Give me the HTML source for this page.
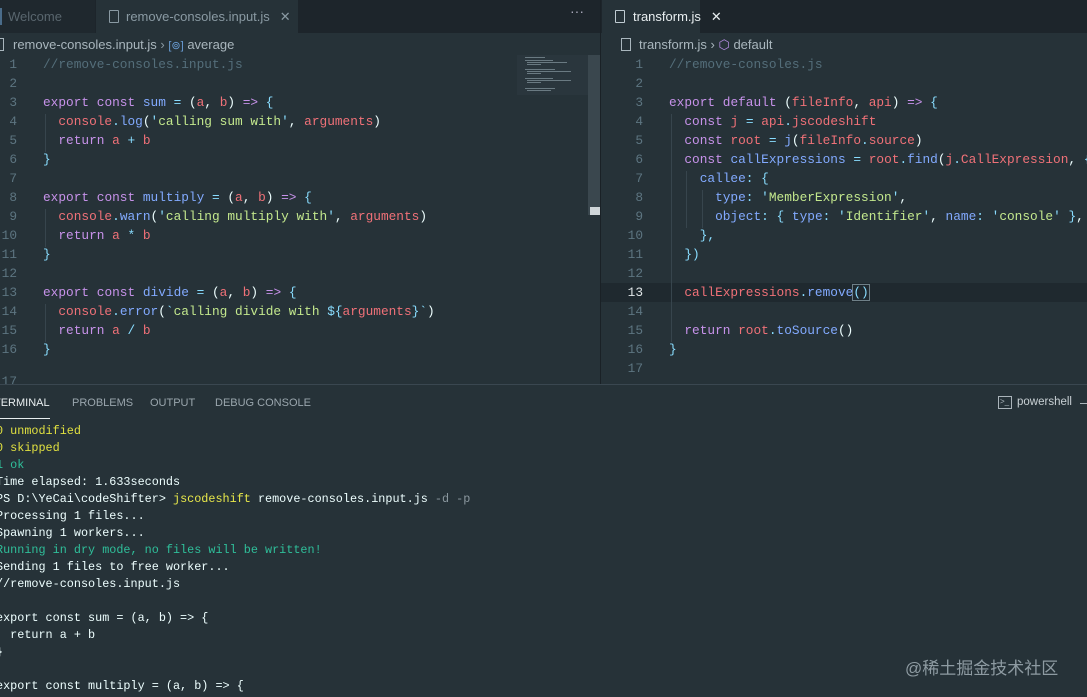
<!DOCTYPE html>
<html><head><meta charset="utf-8"><style>
*{margin:0;padding:0;box-sizing:border-box}
body{width:1087px;height:697px;overflow:hidden;background:#263238;font-family:"Liberation Sans",sans-serif;position:relative;color:#eeffff}
.abs{position:absolute}
.mono{font-family:"Liberation Mono",monospace;font-size:12.8px;white-space:pre}
.ln{position:absolute;color:#5d7581;text-align:right;width:20px}
.cl{position:absolute;color:#eeffff}
.k{color:#c792ea}.f{color:#82aaff}.s{color:#c3e88d}.r{color:#f07178}.p{color:#89ddff}.c{color:#546e7a}.y{color:#ffcb6b}
.ui{font-size:13px}
.tl{position:absolute;left:-4px;font-family:"Liberation Mono",monospace;font-size:11.8px;white-space:pre;color:#eeffff}
.mm{position:absolute;height:1px;background:#6a7a82}
</style></head><body>
<div class="abs" style="left:0;top:0;width:1087px;height:33px;background:#1d252b"></div>
<div class="abs ui" style="left:0;top:0;width:95px;height:33px;background:#1f282e;color:#59666e;padding:9px 0 0 8px">Welcome</div>
<div class="abs" style="left:0;top:8px;width:2px;height:17px;background:#4a6c8a"></div>
<div class="abs ui" style="left:96px;top:0;width:202px;height:33px;background:#263238;color:#8a9aa3;padding:9px 0 0 30px">remove-consoles.input.js<span style="margin-left:10px;color:#8a9aa3">✕</span></div>
<div class="abs" style="left:109px;top:10px;width:10px;height:13px;border:1px solid #8a9aa3;border-radius:1px"></div>
<div class="abs" style="left:570px;top:3px;color:#aab;font-size:14px">···</div>
<div class="abs ui" style="left:602px;top:0;width:98px;height:33px;background:#263238;color:#e8eef0;padding:9px 0 0 31px">transform.js<span style="margin-left:10px">✕</span></div>
<div class="abs" style="left:615px;top:10px;width:10px;height:13px;border:1px solid #c0ccd2;border-radius:1px"></div>
<div class="abs" style="left:600px;top:0;width:1px;height:384px;background:#1a2126"></div>
<div class="abs ui" style="left:13px;top:37px;color:#a9b6bd">remove-consoles.input.js <span style="color:#8a9aa3">›</span> <span style="color:#6a9fd8;font-size:11px">[⊚]</span> average</div>
<div class="abs" style="left:-3px;top:38px;width:7px;height:13px;border:1px solid #a9b6bd"></div>
<div class="abs ui" style="left:639px;top:37px;color:#a9b6bd">transform.js <span>›</span> <span style="color:#b28ce0">⬡</span> default</div>
<div class="abs" style="left:621px;top:38px;width:10px;height:13px;border:1px solid #a9b6bd"></div>
<div class="abs" style="left:517px;top:55px;width:71px;height:40px;background:#2a363d"></div>
<div class="mm" style="left:525px;top:57px;width:20px"></div>
<div class="mm" style="left:525px;top:60px;width:28px"></div>
<div class="mm" style="left:527px;top:62px;width:40px"></div>
<div class="mm" style="left:527px;top:64px;width:14px"></div>
<div class="mm" style="left:525px;top:69px;width:30px"></div>
<div class="mm" style="left:527px;top:71px;width:44px"></div>
<div class="mm" style="left:527px;top:73px;width:14px"></div>
<div class="mm" style="left:525px;top:78px;width:28px"></div>
<div class="mm" style="left:527px;top:80px;width:44px"></div>
<div class="mm" style="left:527px;top:82px;width:14px"></div>
<div class="mm" style="left:525px;top:88px;width:30px"></div>
<div class="mm" style="left:527px;top:90px;width:24px"></div>
<div class="abs" style="left:588px;top:55px;width:12px;height:160px;background:#3a474e"></div>
<div class="abs" style="left:590px;top:207px;width:10px;height:8px;background:#cfd6d9"></div>
<div class="mono">
<div class="ln" style="left:-3px;top:57px">1</div><div class="cl" style="left:43px;top:57px"><span class="c">//remove-consoles.input.js</span></div>
<div class="ln" style="left:-3px;top:76px">2</div>
<div class="ln" style="left:-3px;top:95px">3</div><div class="cl" style="left:43px;top:95px"><span class="k">export</span> <span class="k">const</span> <span class="f">sum</span> <span class="p">=</span> (<span class="r">a</span>, <span class="r">b</span>) <span class="k">=&gt;</span> <span class="p">{</span></div>
<div class="ln" style="left:-3px;top:114px">4</div><div class="cl" style="left:43px;top:114px">  <span class="r">console</span><span class="p">.</span><span class="f">log</span>(<span class="p">'</span><span class="s">calling sum with</span><span class="p">'</span>, <span class="r">arguments</span>)</div>
<div class="ln" style="left:-3px;top:133px">5</div><div class="cl" style="left:43px;top:133px">  <span class="k">return</span> <span class="r">a</span> <span class="p">+</span> <span class="r">b</span></div>
<div class="ln" style="left:-3px;top:152px">6</div><div class="cl" style="left:43px;top:152px"><span class="p">}</span></div>
<div class="ln" style="left:-3px;top:171px">7</div>
<div class="ln" style="left:-3px;top:190px">8</div><div class="cl" style="left:43px;top:190px"><span class="k">export</span> <span class="k">const</span> <span class="f">multiply</span> <span class="p">=</span> (<span class="r">a</span>, <span class="r">b</span>) <span class="k">=&gt;</span> <span class="p">{</span></div>
<div class="ln" style="left:-3px;top:209px">9</div><div class="cl" style="left:43px;top:209px">  <span class="r">console</span><span class="p">.</span><span class="f">warn</span>(<span class="p">'</span><span class="s">calling multiply with</span><span class="p">'</span>, <span class="r">arguments</span>)</div>
<div class="ln" style="left:-3px;top:228px">10</div><div class="cl" style="left:43px;top:228px">  <span class="k">return</span> <span class="r">a</span> <span class="p">*</span> <span class="r">b</span></div>
<div class="ln" style="left:-3px;top:247px">11</div><div class="cl" style="left:43px;top:247px"><span class="p">}</span></div>
<div class="ln" style="left:-3px;top:266px">12</div>
<div class="ln" style="left:-3px;top:285px">13</div><div class="cl" style="left:43px;top:285px"><span class="k">export</span> <span class="k">const</span> <span class="f">divide</span> <span class="p">=</span> (<span class="r">a</span>, <span class="r">b</span>) <span class="k">=&gt;</span> <span class="p">{</span></div>
<div class="ln" style="left:-3px;top:304px">14</div><div class="cl" style="left:43px;top:304px">  <span class="r">console</span><span class="p">.</span><span class="f">error</span>(<span class="p">`</span><span class="s">calling divide with </span><span class="p">${</span><span class="r">arguments</span><span class="p">}`</span>)</div>
<div class="ln" style="left:-3px;top:323px">15</div><div class="cl" style="left:43px;top:323px">  <span class="k">return</span> <span class="r">a</span> <span class="p">/</span> <span class="r">b</span></div>
<div class="ln" style="left:-3px;top:342px">16</div><div class="cl" style="left:43px;top:342px"><span class="p">}</span></div>
<div class="ln" style="left:-3px;top:374px">17</div>
</div>
<div class="abs" style="left:601px;top:283px;width:486px;height:19px;background:#1f292f"></div>
<div class="mono">
<div class="ln" style="left:623px;top:57px">1</div><div class="cl" style="left:669px;top:57px"><span class="c">//remove-consoles.js</span></div>
<div class="ln" style="left:623px;top:76px">2</div>
<div class="ln" style="left:623px;top:95px">3</div><div class="cl" style="left:669px;top:95px"><span class="k">export</span> <span class="k">default</span> (<span class="r">fileInfo</span>, <span class="r">api</span>) <span class="k">=&gt;</span> <span class="p">{</span></div>
<div class="ln" style="left:623px;top:114px">4</div><div class="cl" style="left:669px;top:114px">  <span class="k">const</span> <span class="r">j</span> <span class="p">=</span> <span class="r">api</span><span class="p">.</span><span class="r">jscodeshift</span></div>
<div class="ln" style="left:623px;top:133px">5</div><div class="cl" style="left:669px;top:133px">  <span class="k">const</span> <span class="r">root</span> <span class="p">=</span> <span class="f">j</span>(<span class="r">fileInfo</span><span class="p">.</span><span class="r">source</span>)</div>
<div class="ln" style="left:623px;top:152px">6</div><div class="cl" style="left:669px;top:152px">  <span class="k">const</span> <span class="f">callExpressions</span> <span class="p">=</span> <span class="r">root</span><span class="p">.</span><span class="f">find</span>(<span class="r">j</span><span class="p">.</span><span class="r">CallExpression</span>, <span class="p">{</span></div>
<div class="ln" style="left:623px;top:171px">7</div><div class="cl" style="left:669px;top:171px">    <span class="f">callee</span><span class="p">:</span> <span class="p">{</span></div>
<div class="ln" style="left:623px;top:190px">8</div><div class="cl" style="left:669px;top:190px">      <span class="f">type</span><span class="p">:</span> <span class="p">'</span><span class="s">MemberExpression</span><span class="p">'</span>,</div>
<div class="ln" style="left:623px;top:209px">9</div><div class="cl" style="left:669px;top:209px">      <span class="f">object</span><span class="p">:</span> <span class="p">{</span> <span class="f">type</span><span class="p">:</span> <span class="p">'</span><span class="s">Identifier</span><span class="p">'</span>, <span class="f">name</span><span class="p">:</span> <span class="p">'</span><span class="s">console</span><span class="p">'</span> <span class="p">}</span>,</div>
<div class="ln" style="left:623px;top:228px">10</div><div class="cl" style="left:669px;top:228px">    <span class="p">},</span></div>
<div class="ln" style="left:623px;top:247px">11</div><div class="cl" style="left:669px;top:247px">  <span class="p">})</span></div>
<div class="ln" style="left:623px;top:266px">12</div>
<div class="ln" style="left:623px;top:285px;color:#e0e6e8">13</div><div class="cl" style="left:669px;top:285px">  <span class="r">callExpressions</span><span class="p">.</span><span class="f">remove</span><span class="p" style="outline:1px solid #6f8088">()</span></div>
<div class="ln" style="left:623px;top:304px">14</div>
<div class="ln" style="left:623px;top:323px">15</div><div class="cl" style="left:669px;top:323px">  <span class="k">return</span> <span class="r">root</span><span class="p">.</span><span class="f">toSource</span>()</div>
<div class="ln" style="left:623px;top:342px">16</div><div class="cl" style="left:669px;top:342px"><span class="p">}</span></div>
<div class="ln" style="left:623px;top:361px">17</div>
</div>
<div class="abs" style="left:45px;top:114px;width:1px;height:38px;background:#37454d"></div>
<div class="abs" style="left:45px;top:209px;width:1px;height:38px;background:#37454d"></div>
<div class="abs" style="left:45px;top:304px;width:1px;height:38px;background:#37454d"></div>
<div class="abs" style="left:671px;top:114px;width:1px;height:228px;background:#37454d"></div>
<div class="abs" style="left:686px;top:171px;width:1px;height:57px;background:#37454d"></div>
<div class="abs" style="left:702px;top:190px;width:1px;height:38px;background:#37454d"></div>
<div class="abs" style="left:0;top:384px;width:1087px;height:313px;background:#263238;border-top:1px solid #3a4750"></div>
<div class="abs" style="left:-6px;top:397px;font-size:11px;color:#e8eef0">TERMINAL</div>
<div class="abs" style="left:0;top:418px;width:50px;height:1px;background:#e8eef0"></div>
<div class="abs" style="left:72px;top:397px;font-size:11px;color:#9aa6ad">PROBLEMS</div>
<div class="abs" style="left:150px;top:397px;font-size:11px;color:#9aa6ad">OUTPUT</div>
<div class="abs" style="left:215px;top:397px;font-size:11px;color:#9aa6ad">DEBUG CONSOLE</div>
<div class="abs" style="left:998px;top:396px;width:14px;height:13px;border:1px solid #aab4ba;font-size:8px;color:#aab4ba;line-height:10px;padding-left:1px">&gt;_</div>
<div class="abs" style="left:1017px;top:396px;font-size:11.5px;color:#c8d0d4">powershell</div>
<div class="abs" style="left:1080px;top:403px;width:7px;height:1px;background:#aab4ba"></div>
<div class="tl" style="top:424px;color:#e0e040">0 unmodified</div>
<div class="tl" style="top:441px;color:#e0e040">0 skipped</div>
<div class="tl" style="top:458px;color:#2fbf9a">1 ok</div>
<div class="tl" style="top:475px">Time elapsed: 1.633seconds</div>
<div class="tl" style="top:492px">PS D:\YeCai\codeShifter&gt; <span style="color:#e8e84a">jscodeshift</span> remove-consoles.input.js <span style="color:#8a979e">-d -p</span></div>
<div class="tl" style="top:509px">Processing 1 files...</div>
<div class="tl" style="top:526px">Spawning 1 workers...</div>
<div class="tl" style="top:543px;color:#2fbf9a">Running in dry mode, no files will be written!</div>
<div class="tl" style="top:560px">Sending 1 files to free worker...</div>
<div class="tl" style="top:577px">//remove-consoles.input.js</div>
<div class="tl" style="top:611px">export const sum = (a, b) =&gt; {</div>
<div class="tl" style="top:628px">  return a + b</div>
<div class="tl" style="top:645px">}</div>
<div class="tl" style="top:679px">export const multiply = (a, b) =&gt; {</div>
<div class="abs" style="left:905px;top:654px;font-family:'Liberation Sans','Noto Sans CJK SC',sans-serif;font-size:17px;color:#8e9ba2">@稀土掘金技术社区</div>
</body></html>
